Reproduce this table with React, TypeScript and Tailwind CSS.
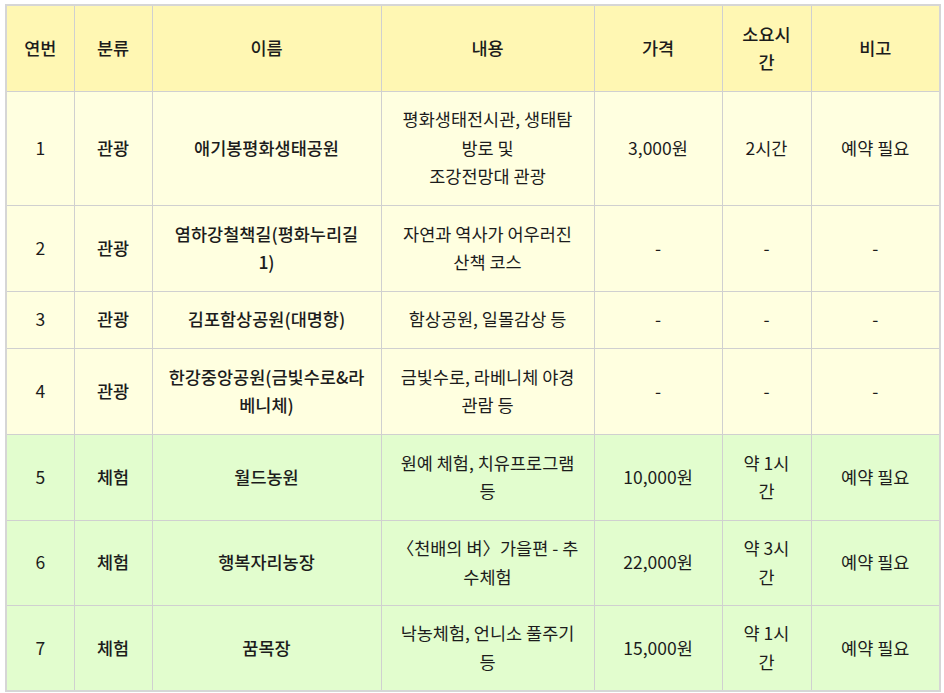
import React from "react";

type Row = {
  no: string;
  kind: string;
  name: string[];
  desc: string[];
  price: string;
  time: string[];
  note: string;
  h: string;
  green?: boolean;
};

const rows: Row[] = [
  { no: "1", kind: "관광", name: ["애기봉평화생태공원"], desc: ["평화생태전시관, 생태탐", "방로 및", "조강전망대 관광"], price: "3,000원", time: ["2시간"], note: "예약 필요", h: "h-[114px]" },
  { no: "2", kind: "관광", name: ["염하강철책길(평화누리길", "1)"], desc: ["자연과 역사가 어우러진", "산책 코스"], price: "-", time: ["-"], note: "-", h: "h-[86px]" },
  { no: "3", kind: "관광", name: ["김포함상공원(대명항)"], desc: ["함상공원, 일몰감상 등"], price: "-", time: ["-"], note: "-", h: "h-[57px]" },
  { no: "4", kind: "관광", name: ["한강중앙공원(금빛수로&라", "베니체)"], desc: ["금빛수로, 라베니체 야경", "관람 등"], price: "-", time: ["-"], note: "-", h: "h-[86px]" },
  { no: "5", kind: "체험", name: ["월드농원"], desc: ["원예 체험, 치유프로그램", "등"], price: "10,000원", time: ["약 1시", "간"], note: "예약 필요", h: "h-[86px]", green: true },
  { no: "6", kind: "체험", name: ["행복자리농장"], desc: ["〈천배의 벼〉가을편 - 추", "수체험"], price: "22,000원", time: ["약 3시", "간"], note: "예약 필요", h: "h-[85px]", green: true },
  { no: "7", kind: "체험", name: ["꿈목장"], desc: ["낙농체험, 언니소 풀주기", "등"], price: "15,000원", time: ["약 1시", "간"], note: "예약 필요", h: "h-[86px]", green: true },
];

function Lines({ lines }: { lines: string[] }) {
  return (
    <>
      {lines.map((l, i) => (
        <React.Fragment key={i}>
          {i > 0 && <br />}
          {l}
        </React.Fragment>
      ))}
    </>
  );
}

const cell = "border border-[#d0d0d0] px-1 py-0 text-center align-middle whitespace-nowrap";

export default function App() {
  return (
    <div
      className="bg-white pl-[5px] pt-[4px] text-[17.5px] leading-[28.5px] text-[#1c1c1c]"
      style={{ fontFamily: '"Noto Sans CJK KR", "Noto Sans", sans-serif' }}
    >
      <table className="w-[934px] table-fixed border-collapse border-2 border-[#d6d6d6]">
        <colgroup>
          <col className="w-[68px]" />
          <col className="w-[78px]" />
          <col className="w-[229px]" />
          <col className="w-[213px]" />
          <col className="w-[128px]" />
          <col className="w-[89px]" />
          <col className="w-[129px]" />
        </colgroup>
        <thead>
          <tr className="h-[86px] bg-[#fff7b3]">
            <th className={`${cell} font-medium`}>연번</th>
            <th className={`${cell} font-medium`}>분류</th>
            <th className={`${cell} font-medium`}>이름</th>
            <th className={`${cell} font-medium`}>내용</th>
            <th className={`${cell} font-medium`}>가격</th>
            <th className={`${cell} font-medium`}>
              소요시
              <br />간
            </th>
            <th className={`${cell} font-medium`}>비고</th>
          </tr>
        </thead>
        <tbody>
          {rows.map((r) => (
            <tr key={r.no} className={`${r.h} ${r.green ? "bg-[#e2fdce]" : "bg-[#ffffe0]"}`}>
              <td className={cell}>{r.no}</td>
              <td className={`${cell} font-medium`}>{r.kind}</td>
              <td className={`${cell} font-medium`}>
                <Lines lines={r.name} />
              </td>
              <td className={cell}>
                <Lines lines={r.desc} />
              </td>
              <td className={cell}>{r.price}</td>
              <td className={cell}>
                <Lines lines={r.time} />
              </td>
              <td className={cell}>{r.note}</td>
            </tr>
          ))}
        </tbody>
      </table>
    </div>
  );
}
